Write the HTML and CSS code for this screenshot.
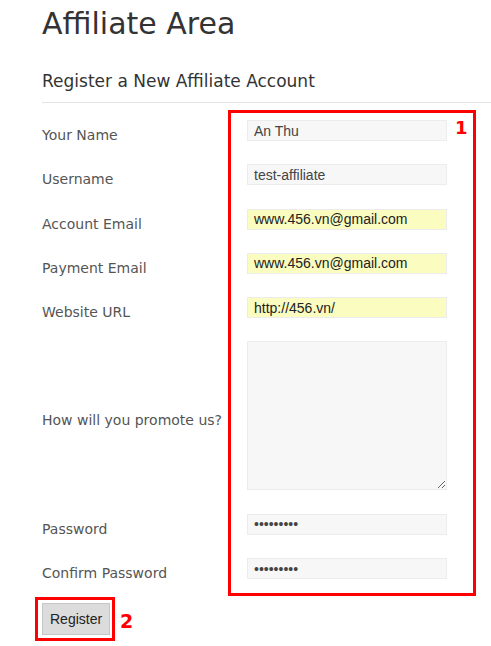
FILE: index.html
```html
<!DOCTYPE html>
<html>
<head>
	<title>Affiliate Area</title>
	<link rel="stylesheet" href="styles.css">
</head>
<body>
	<div class="page">
		<h1>Affiliate Area</h1>
		<h2>Register a New Affiliate Account</h2>

		<form class="register-form">
			<div class="fields">
				<label for="name">Your Name</label>
				<input type="text" id="name" value="An Thu">

				<label for="username">Username</label>
				<input type="text" id="username" value="test-affiliate">

				<label for="account-email">Account Email</label>
				<input type="email" id="account-email" class="autofill" value="www.456.vn@gmail.com">

				<label for="payment-email">Payment Email</label>
				<input type="email" id="payment-email" class="autofill" value="www.456.vn@gmail.com">

				<label for="url">Website URL</label>
				<input type="text" id="url" class="autofill" value="http://456.vn/">

				<label for="promote">How will you promote us?</label>
				<textarea id="promote"></textarea>

				<label for="password">Password</label>
				<input type="password" id="password" value="123456789">

				<label for="confirm">Confirm Password</label>
				<input type="password" id="confirm" value="123456789">
			</div>

			<div class="submit-row">
				<button type="button" id="register">Register</button>
			</div>
		</form>

		<!-- annotation marks drawn over the screenshot -->
		<div class="mark mark-fields"></div>
		<span class="mark-num num-1">1</span>
		<div class="mark mark-button"></div>
		<span class="mark-num num-2">2</span>
	</div>
</body>
</html>
```

FILE: styles.css
```css
body {
	margin: 0;
	background-color: #fff;
	font-family: "DejaVu Sans", Verdana, sans-serif;
}

.page {
	position: relative;
	padding-left: 42px;
	height: 646px;
	overflow: hidden;
}

h1 {
	margin: 0;
	padding-top: 6px;
	font-size: 30px;
	line-height: 36px;
	font-weight: normal;
	color: #333;
}

h2 {
	margin: 27px 0 0;
	padding-bottom: 9px;
	font-size: 17px;
	line-height: 24px;
	font-weight: normal;
	color: #333;
	border-bottom: 1px solid #e2e2e2;
}

.register-form {
	margin-top: 17px;
}

.fields {
	display: grid;
	grid-template-columns: 205px 200px;
	row-gap: 23.3px;
	align-items: center;
}

.fields label {
	font-size: 14px;
	line-height: 21px;
	color: #555;
	margin: 5px 0 -5px;
}

.fields input,
.fields textarea {
	box-sizing: border-box;
	width: 200px;
	height: 21px;
	margin: 0;
	padding: 0 6px;
	border: 1px solid #ececec;
	background-color: #f7f7f7;
	font-family: "Liberation Sans", Arial, sans-serif;
	font-size: 14px;
	color: #444;
	outline: none;
}

.fields textarea {
	height: 149px;
	resize: both;
}

.fields input.autofill {
	background-color: #fafcc0;
	color: #222;
}

.submit-row {
	margin-top: 24px;
}

#register {
	height: 32px;
	padding: 0 7px;
	border: 1px solid #c6c6c6;
	border-radius: 0;
	background-color: #dcdcdc;
	font-family: "Liberation Sans", Arial, sans-serif;
	font-size: 14px;
	color: #222;
}

.mark {
	position: absolute;
	box-sizing: border-box;
	border: 3px solid #f00;
}

.mark-fields {
	left: 228px;
	top: 110px;
	width: 248px;
	height: 486px;
}

.mark-button {
	left: 35px;
	top: 597px;
	width: 80px;
	height: 44px;
}

.mark-num {
	position: absolute;
	font-family: "DejaVu Sans", sans-serif;
	font-weight: bold;
	line-height: 1;
	color: #f00;
}

.num-1 {
	left: 455px;
	top: 119px;
	font-size: 18px;
}

.num-2 {
	left: 120px;
	top: 612px;
	font-size: 19px;
}
```
